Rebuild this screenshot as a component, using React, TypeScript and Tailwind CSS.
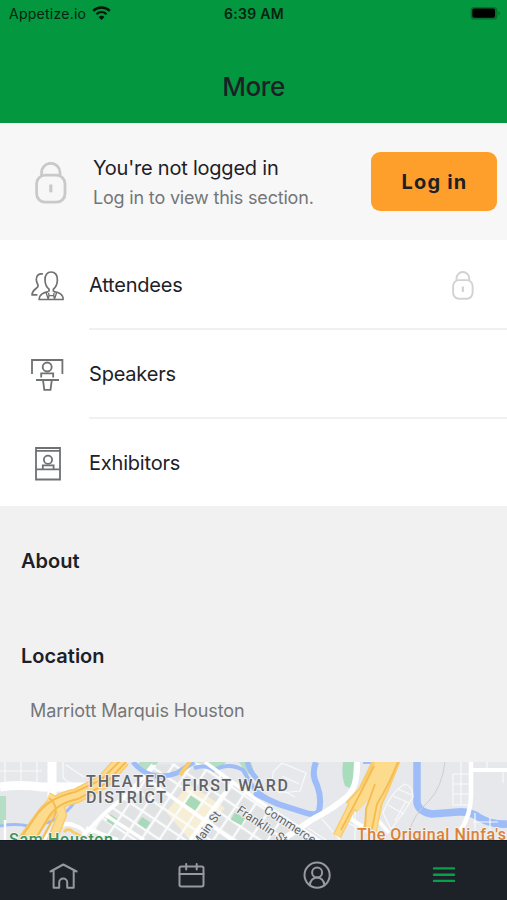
import * as React from "react";

type IconProps = {
  className?: string;
};

const LockIcon = ({ className }: IconProps) => (
  <svg
    viewBox="0 0 32 42"
    fill="none"
    stroke="currentColor"
    strokeWidth="2.8"
    className={className}
  >
    <rect x="1.6" y="13.2" width="28.4" height="27" rx="8.5" />
    <path d="M6.6 13.8V10.5a9.2 9.2 0 0 1 18.4 0v3.3" />
    <path d="M15.8 22.5v7.8" strokeWidth="3.2" />
  </svg>
);

const AttendeesIcon = () => (
  <svg
    width="33"
    height="30"
    viewBox="0 0 33 30"
    fill="none"
    stroke="currentColor"
    strokeWidth="1.7"
    strokeLinejoin="round"
  >
    <path d="M12 3C7.8 2.1 5.2 4.7 5.3 8.5c.1 3.2 1.6 4.4 1.8 6.2.2 3-5.7 2.8-6.1 9.2h5.4" />
    <path d="M18 20.8v-2.6c-2.2-1.8-3.8-5.3-4-9-.3-5.2 2.2-8.2 6.1-8.2s6.6 3 6.3 8.2c-.2 3.7-1.8 7.2-4 9v2.6" />
    <path d="M17.5 20.7c-5 .9-9 2.2-9.3 7.8h23.9c-.1-5.5-3.6-7-9.4-7.8" />
    <path d="m15.2 22 2 6 .8-3.4h4.7l.8 3.4 2-6M17.6 22l.4 2.6M23 22l-.3 2.6" strokeWidth="1.4" />
  </svg>
);

const SpeakersIcon = () => (
  <svg
    width="33"
    height="32"
    viewBox="0 0 33 32"
    fill="none"
    stroke="currentColor"
    strokeWidth="1.8"
  >
    <path d="M1 15V1h30.4v14" />
    <circle cx="16.2" cy="8" r="4.5" />
    <path d="M10.2 18.4v-4h12v4M5 21h23M12 21.2l1.3 9.7h6.2l1.3-9.7" />
  </svg>
);

const ExhibitorsIcon = () => (
  <svg
    width="26"
    height="34"
    viewBox="0 0 26 34"
    fill="none"
    stroke="currentColor"
    strokeWidth="1.8"
  >
    <path d="M1 1h24v31.5H1zM1 3.8h24M1 22.3h24" />
    <circle cx="13" cy="12.7" r="4.1" />
    <path d="M7.8 22.3v-3.9h10.8v3.9" />
  </svg>
);

const WifiIcon = () => (
  <svg width="19" height="15" viewBox="0 0 19 15" fill="none" stroke="#04150a">
    <path d="M1.2 4.9c4.8-4.5 11.8-4.5 16.6 0" strokeWidth="2.5" />
    <path d="M4.4 8.2c3-2.7 7.2-2.7 10.2 0" strokeWidth="2.2" />
    <path d="m6.6 10.9 2.9 3.2 2.9-3.2c-1.6-1.4-4.2-1.4-5.8 0Z" fill="#04150a" stroke="none" />
  </svg>
);

const BatteryIcon = () => (
  <svg width="31" height="15" viewBox="0 0 31 15">
    <rect x=".6" y=".9" width="26.8" height="12.6" rx="3.6" fill="#04702d" />
    <rect x="2.3" y="2.6" width="22.7" height="9.2" rx="2" fill="#000" />
    <path d="M28.6 5v4.6q3-2.3 0-4.6" fill="#04702d" />
  </svg>
);

const CityMap = () => (
  <svg width="507" height="78" viewBox="0 0 507 78" className="block">
    <defs>
      <clipPath id="downtown">
        <path d="M153 3 206 0 257 38 320 78 82 78 111 48 130 31Z" />
      </clipPath>
      <pattern
        id="blocks"
        width="15"
        height="14"
        patternUnits="userSpaceOnUse"
        patternTransform="translate(193 41) rotate(34) translate(-7.5 -7)"
      >
        <rect width="15" height="14" fill="#fafbfb" />
        <rect x="1.2" y="1.2" width="12.6" height="11.6" fill="#e0e2e4" />
      </pattern>
      <pattern
        id="shops"
        width="15"
        height="14"
        patternUnits="userSpaceOnUse"
        patternTransform="translate(193 41) rotate(34) translate(-7.5 -7)"
      >
        <rect width="15" height="14" fill="#fafbfb" />
        <rect x="1.2" y="1.2" width="12.6" height="11.6" fill="#f6efd5" />
      </pattern>
    </defs>
    <rect width="507" height="78" fill="#e6e8eb" />
    <path d="M0 34h6v29H0zM140 0h18l-6 14-17-8zM192 0h34l-7 8-24-2zM239 0h12l4 14-9-3z" fill="#b5dec4" />
    <path d="m343 0h11l-2 27-7-3q-4-11-2-24" fill="#a9dcbb" />

    {/* downtown street grid */}
    <g clipPath="url(#downtown)">
      <rect x="80" width="245" height="78" fill="url(#blocks)" />
      <path d="M166 50 189 22 225 46 195 84Z" fill="url(#shops)" />
      <g fill="#a8d9b8">
        <rect x="-6" y="-5" width="12" height="10" transform="translate(193 41) rotate(34)" />
        <rect x="-5" y="-4" width="10" height="8" transform="translate(144 61) rotate(34)" />
        <rect x="-4" y="-4" width="8" height="8" transform="translate(112 58) rotate(34)" />
        <rect x="-6" y="-4" width="12" height="8" transform="translate(238 57) rotate(28)" />
      </g>
      <path d="M104 52l40 26M190 78l62-84M137 10l106 76" stroke="#fff" strokeWidth="3.5" />
    </g>
    <path d="M79 78 104 52 130 30 153 3M86 66l32 12" stroke="#fff" strokeWidth="4" fill="none" />

    {/* water */}
    <g fill="none" stroke="#9dbcf8">
      <path d="M133 0q8 10 19 13t25-2L194 0" strokeWidth="5" />
      <path d="M0 64q16-3 28 0 32-1 48-26" strokeWidth="3" />
      <path d="M194 6q12-4 20 2 15-8 29 0l12 20 12 8" strokeWidth="4" />
      <path d="M247 0q3 10 10 17" strokeWidth="5" />
      <path d="M316 0q-5 12 1 23 5 13 2 26-3 6-16 1l-25-8-24-11" strokeWidth="6" />
      <path d="M417 0v41q2 9 15 11l26-2q12-1 22 6 12 7 27 6" strokeWidth="7.5" />
      <path d="M363 0h14" strokeWidth="4" />
    </g>

    {/* minor roads */}
    <g fill="none" stroke="#f8f9fa" strokeWidth="1.2">
      <path d="M0 9h42M5 0v20M21 0v20M37 0v20M63 0v15q2 5 14 7M66 3l18 12" />
      <path d="m273 10 9-9 24 10-6 18-20 2-8-6zM282 14l17 8M265 19l30 16" />
      <path d="M383 51q8-21 22-29 8 2 8 13-9 16-22 32zM388 43l16 9M393 34l16 7M398 27l14 6M395 59l11-20" />
      <path d="M453 12v31h15M453 12h17M453 22h17M453 32h17M461 0v43M487 0v8M503 9v12M473 60h25M475 51v17M490 55v18" />
      <path d="M322 57 340 78M308 66l18 12M347 50l-8 28M355 50v28M342 58l39 19" />
    </g>
    <path d="M445 0q-3 25-16 39-15 13-20 31" stroke="#cbcfd1" strokeWidth="1" fill="none" />
    <g fill="none" stroke="#fff">
      <path d="M0 25q20-3 42 0h45M52 0v38" strokeWidth="9" />
      <path d="M5 58v20" strokeWidth="2.5" />
      <path d="M45 78q13-22 31-14 13 5 7 14" strokeWidth="4" />
      <path d="M357 0q1 22-8 33-16 14-36 24l-31 21" strokeWidth="6" />
      <path d="M351 46v11l12 8" strokeWidth="4" />
      <path d="M471 0v33q0 20-11 36" strokeWidth="4.5" />
      <path d="M471 8h36" strokeWidth="4" />
      <path d="m377 57 12 14M205 0l52 38 64 42" strokeWidth="3.5" />
    </g>

    {/* freeways */}
    <g fill="none">
      <path d="M123-2 103 20 76 34Q54 38 43 54L24 80" stroke="#f9cb6b" strokeWidth="15" />
      <path d="M48 35q12 5 14 18-5 14-13 31" stroke="#f9cb6b" strokeWidth="10" />
      <path d="M64 70q4-5 9 0l10 5" stroke="#f9cb6b" strokeWidth="3" />
      <path d="M123-2 103 20 76 34Q54 38 43 54L24 80" stroke="#fddb8d" strokeWidth="12" />
      <path d="M48 35q12 5 14 18-5 14-13 31" stroke="#fddb8d" strokeWidth="7" />
      <path d="m121-2-20 20-26 12Q51 35 38 51L18 80M126 0l-21 22-27 15Q57 41 48 56L34 80M49 36q9 7 6 17L40 81" stroke="#f5bb50" strokeWidth="2" />
      <path d="M191-2 180 13" stroke="#f9cb6b" strokeWidth="4" />
      <path d="m381-3-16 33-14 15" stroke="#f9cb6b" strokeWidth="15" />
      <path d="M353 42 337 74" stroke="#f9cb6b" strokeWidth="9" />
      <path d="M394-3q-10 26-18 43l-6 28" stroke="#f9cb6b" strokeWidth="14" />
      <path d="M384-3 367 30l-14 15" stroke="#fddb8d" strokeWidth="13" />
      <path d="M353 42 337 74" stroke="#fddb8d" strokeWidth="6" />
      <path d="M392-3q-9 26-17 43l-5 28" stroke="#fddb8d" strokeWidth="12" />
      <path d="m374 4-13 26-20 38M399-3q-9 24-22 45l-5 25M375 22l-9 25-1 21" stroke="#f5bb50" strokeWidth="1.8" />
    </g>

    {/* labels */}
    <g
      className="font-['Roboto']"
      fill="#5f6368"
      stroke="#f0f1f2"
      strokeWidth="2"
      paintOrder="stroke"
      strokeLinejoin="round"
    >
      <g fontSize="16" fontWeight="500" fill="#5f6368">
        <text x="86" y="25" textLength="80">THEATER</text>
        <text x="86" y="41" textLength="80">DISTRICT</text>
        <text x="182" y="29" textLength="106">FIRST WARD</text>
      </g>
      <g fontSize="12">
        <text transform="translate(198 86) rotate(-55)">Main St</text>
        <text transform="translate(263 50) rotate(33)" textLength="59">Commerce</text>
        <text transform="translate(236 50) rotate(34)" textLength="58">Franklin St</text>
      </g>
      <text x="9" y="83" fontSize="16" fontWeight="500" fill="#3c9357" textLength="104">
        Sam Houston
      </text>
      <text x="357" y="78" fontSize="16" fontWeight="500" fill="#dc8134" textLength="149">
        The Original Ninfa's
      </text>
    </g>
  </svg>
);

const menus = [
  { label: "Attendees", icon: <AttendeesIcon />, locked: true },
  { label: "Speakers", icon: <SpeakersIcon />, locked: false },
  { label: "Exhibitors", icon: <ExhibitorsIcon />, locked: false },
];

const App = () => {
  return (
    <div className="flex h-[900px] w-[507px] flex-col overflow-hidden bg-[#f1f1f1] font-['Inter',sans-serif] text-[#1d2127]">
      <header className="h-[123px] shrink-0 bg-[#03973f]">
        <div className="grid h-[27px] grid-cols-3 items-center text-[14px] text-[#062410]">
          <div className="flex items-center gap-[6px] pl-[9px]">
            <span className="tracking-[0.25px]">Appetize.io</span>
            <WifiIcon />
          </div>
          <span className="pl-px text-center font-semibold tracking-[0.3px]">
            6:39 AM
          </span>
          <div className="flex justify-end pr-[6px]">
            <BatteryIcon />
          </div>
        </div>
        <h1 className="mt-[42px] text-center text-[26px] leading-[36px] font-medium tracking-[-0.4px]">
          More
        </h1>
      </header>

      <section className="flex h-[117px] shrink-0 items-center bg-[#f7f7f7] pr-[10px] pl-[35px]">
        <LockIcon className="mt-[3px] h-[42px] w-[32px] text-[#c9c9c9]" />
        <div className="mt-[2px] ml-[26px] flex-1 whitespace-nowrap">
          <p className="text-[20px] leading-[30px] tracking-[-0.22px]">
            You're not logged in
          </p>
          <p className="text-[18px] leading-[30px] tracking-[-0.18px] text-[#747678]">
            Log in to view this section.
          </p>
        </div>
        <button
          type="button"
          className="h-[59px] w-[126px] rounded-[9px] bg-[#ff9f2b] pt-px pl-px text-[20px] font-bold tracking-[1.2px]"
        >
          Log in
        </button>
      </section>

      <ul className="h-[266px] shrink-0 bg-white pt-px">
        {menus.map((menu) => (
          <li key={menu.label} className="group flex h-[89px]">
            <div className="flex w-[89px] items-center justify-center pl-[6px] text-[#6f7173]">
              {menu.icon}
            </div>
            <div className="flex flex-1 items-center justify-between border-b-2 border-[#f0f0f0] pr-[33px] group-last:border-transparent">
              <span className="text-[20px] tracking-[-0.2px]">{menu.label}</span>
              {menu.locked && (
                <LockIcon className="mt-px h-[29px] w-[22px] text-[#d2d2d2]" />
              )}
            </div>
          </li>
        ))}
      </ul>

      <section className="h-[256px] shrink-0 pt-[40px] pl-[21px]">
        <h2 className="text-[20px] leading-[30px] font-semibold">About</h2>
        <h2 className="mt-[65px] text-[20px] leading-[30px] font-semibold">
          Location
        </h2>
        <p className="mt-[25px] pl-[9px] text-[18px] leading-[30px] tracking-[-0.1px] text-[#747678]">
          Marriott Marquis Houston
        </p>
      </section>

      <CityMap />

      <nav className="h-[60px] shrink-0 border-t border-[#111820] bg-[#1d2229] text-[#969a9e]">
        <svg
          width="507"
          height="59"
          viewBox="0 841 507 59"
          fill="none"
          stroke="currentColor"
          strokeWidth="2"
          strokeLinecap="round"
          strokeLinejoin="round"
        >
          <path d="m50.5 871.5 12.8-7 13.3 7M53.6 870.5v17.2h5.6v-5.2a4 4 0 0 1 8 0v5.2h6.5v-17.2" />
          <rect x="179.5" y="866.5" width="24" height="20" rx="1.7" />
          <path d="M179.5 874h24M186.2 864v5.5M196.7 864v5.5" />
          <circle cx="317.1" cy="875.1" r="12.6" />
          <circle cx="317.1" cy="872.5" r="5" />
          <path d="M309.8 885.2c.4-10.2 14.2-10.2 14.6 0" />
          <path d="M434 868.4h20M434 874.7h20M434 880.9h20" stroke="#08a04a" strokeWidth="2.4" />
        </svg>
      </nav>
    </div>
  );
};

export default App;
